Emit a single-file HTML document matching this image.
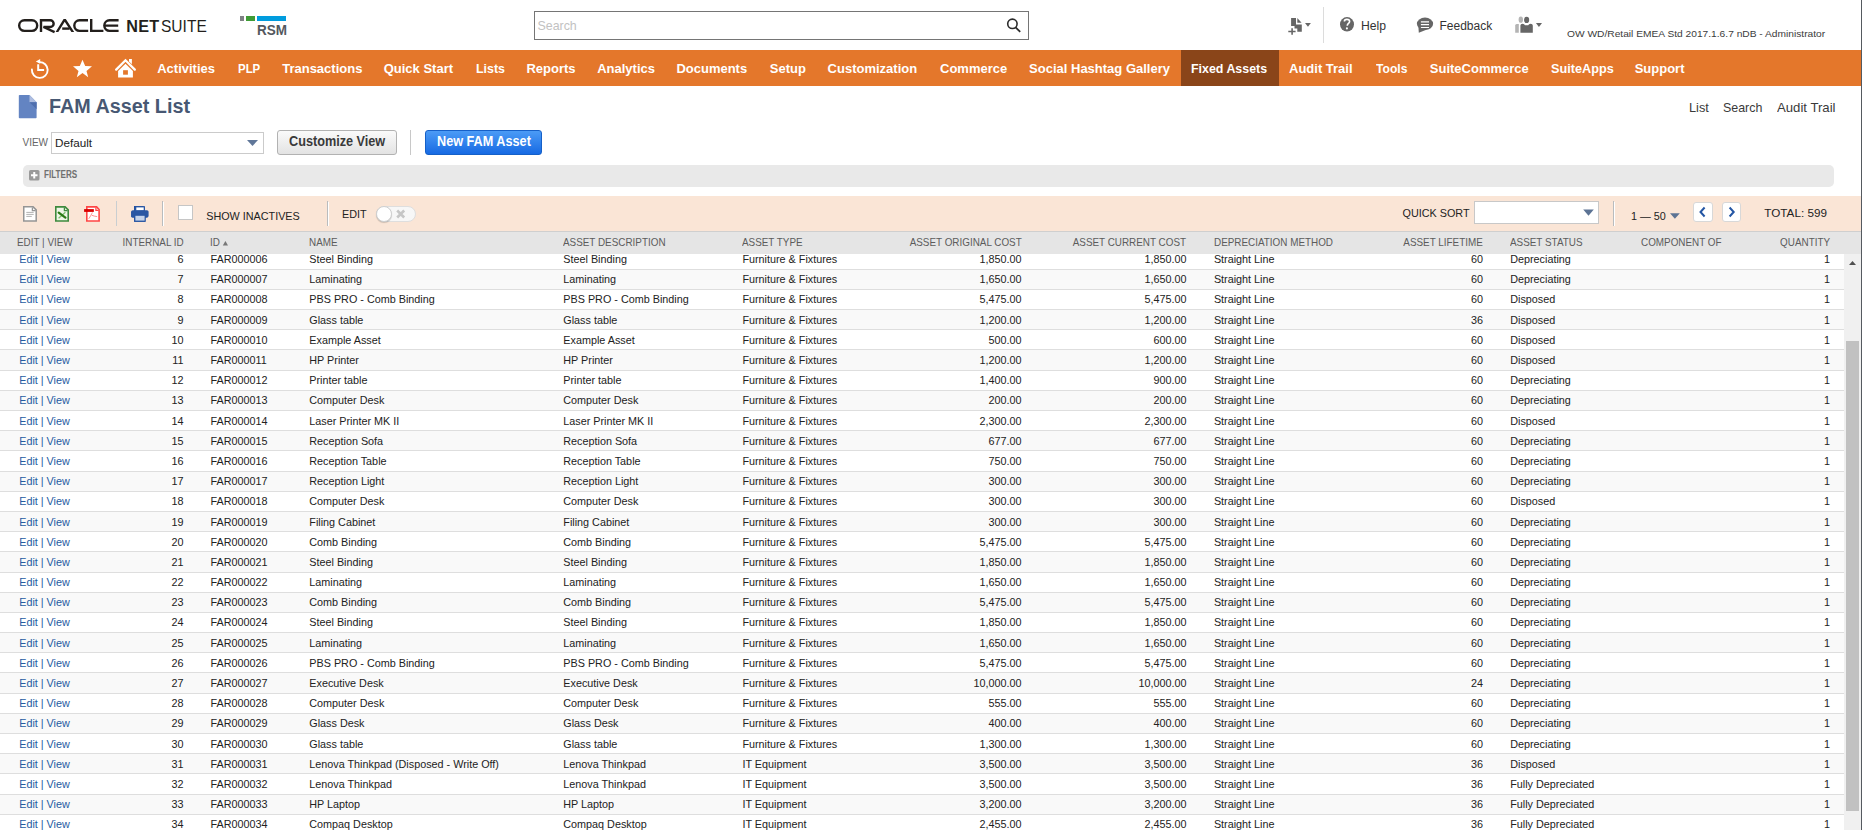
<!DOCTYPE html>
<html><head><meta charset="utf-8"><title>FAM Asset List</title>
<style>
*{margin:0;padding:0;box-sizing:border-box}
html,body{width:1862px;height:830px;overflow:hidden;background:#fff;font-family:"Liberation Sans",sans-serif;color:#333}
.a{position:absolute;white-space:nowrap;line-height:1}
#hdr{position:absolute;left:0;top:0;width:1861px;height:50px;background:#fff}
#nav{position:absolute;left:0;top:50px;width:1861px;height:36px;background:#e4772b}
.ni{position:absolute;top:0;height:36px;color:#fff;font-weight:bold;font-size:13px;line-height:1;white-space:nowrap}
.ni span{position:absolute;top:14px;left:0}
#edge{position:absolute;left:1861px;top:0;width:1px;height:830px;background:#555a60}
.row{position:absolute;left:0;width:1844px}
.sep{position:absolute;left:0;width:1844px;height:1px;background:#dedede}
.c{position:absolute;font-size:10.8px;line-height:11px;white-space:nowrap;color:#222}
.lnk{color:#255ba1}
.pipe{color:#255ba1}
.th{position:absolute;top:238.4px;font-size:10.3px;line-height:10px;white-space:nowrap;color:#5c5c5c;transform:scaleX(0.96)}

</style></head>
<body>
<div id="hdr">
  <!-- ORACLE logo -->
  <svg class="a" style="left:0;top:0" width="130" height="50" viewBox="0 0 130 50">
    <g fill="none" stroke="#231f1c" stroke-width="2.4">
      <rect x="19.15" y="20.3" width="18.05" height="10.6" rx="5.3"/>
      <path d="M41,19.1 V32.1 M41,20.3 H50.3 A3.35,3.35 0 0 1 50.3,27 H43.5 L54.6,32.1"/>
      <path d="M62.2,28.6 H69.6"/>
      <path d="M88,20.3 H79.6 A5.3,5.3 0 0 0 79.6,30.9 H88.2"/>
      <path d="M91.2,19.1 V30.9 H103.4"/>
      <path d="M118.6,20.3 H109.6 A5.3,5.3 0 0 0 109.6,30.9 H118.6 M105.5,25.6 H118.2"/>
    </g>
    <path fill="#231f1c" d="M55.6,32.1 L63.6,19.1 H65.8 L74.2,32.1 H71.4 L64.7,21.7 L58.3,32.1 Z"/>
  </svg>
  <div class="a" style="left:126.2px;top:18px;font-size:16.2px;font-weight:bold;color:#231f1c;letter-spacing:0.35px">NET</div><div class="a" style="left:160.6px;top:18px;font-size:16.2px;color:#231f1c;transform:scaleX(0.96);transform-origin:0 0">SUITE</div>
  <!-- RSM logo -->
  <div class="a" style="left:240px;top:16px;width:4px;height:5px;background:#7f8184"></div>
  <div class="a" style="left:246px;top:16px;width:9px;height:5px;background:#3f9c35"></div>
  <div class="a" style="left:257px;top:16px;width:29px;height:5px;background:#009cde"></div>
  <div class="a" style="left:257px;top:23px;font-size:14px;font-weight:bold;color:#53585e;transform:scaleX(0.965);transform-origin:0 0">RSM</div>
  <!-- search -->
  <div class="a" style="left:534px;top:11px;width:495px;height:29px;border:1px solid #757575;background:#fff"></div>
  <div class="a" style="left:537.5px;top:20px;font-size:12.4px;color:#c2c2c2">Search</div>
  <svg class="a" style="left:0;top:0" width="1862" height="50" viewBox="0 0 1862 50">
    <circle cx="1012.4" cy="23.8" r="4.7" fill="none" stroke="#2b2b2b" stroke-width="1.6"/>
    <path d="M1015.6,27.3 L1020.2,31.9" stroke="#2b2b2b" stroke-width="1.8"/>
    <path d="M1291.1,18 H1296 V24.4 H1301.8 V31.8 H1297.3 V28.5 H1294.5 V25.9 H1291.1 Z" fill="#666"/>
    <path d="M1297.3,18 V22.7 H1301.6 Z" fill="#666"/>
    <path d="M1288.3,31.45 H1295.6 M1292.1,28.2 V34.7" stroke="#666" stroke-width="1.6"/>
    <path d="M1305,23.1 H1310.9 L1307.95,26.7 Z" fill="#666"/>
    <rect x="1323" y="7" width="1" height="36" fill="#dcdcdc"/>
    <ellipse cx="1347" cy="24.3" rx="7" ry="7.3" fill="#666"/>
    <path d="M1344.4,21.4 C1344.4,19.9 1345.6,19.4 1346.9,19.4 C1348.4,19.4 1349.6,20.2 1349.6,21.6 C1349.6,23.3 1347.3,23.4 1347.3,25.4 V25.7" fill="none" stroke="#fff" stroke-width="1.6"/>
    <circle cx="1346.9" cy="28.4" r="1.05" fill="#fff"/>
    <ellipse cx="1425" cy="23.8" rx="8.1" ry="6.2" fill="#666"/>
    <path d="M1418.4,26.5 L1418.8,32.8 L1427,29.6 Z" fill="#666"/>
    <path d="M1420.9,21.8 H1429 M1420.9,24.6 H1429 M1420.9,27.5 H1429" stroke="#fff" stroke-width="1.2"/>
    <ellipse cx="1520.8" cy="19.7" rx="2.2" ry="3.1" fill="#b4b4b4"/>
    <path d="M1515.2,25.4 Q1515.2,23.9 1516.7,23.9 H1518.8 V32.8 H1515.2 Z" fill="#b4b4b4"/>
    <path d="M1519.2,16 H1523 V24 H1519.2 Z" fill="#fff" opacity="0"/>
    <ellipse cx="1526.6" cy="19.9" rx="3.1" ry="3.35" fill="#fff"/>
    <ellipse cx="1526.6" cy="19.9" rx="2.6" ry="3.1" fill="#666"/>
    <path d="M1519.6,23 V33.6 H1521" stroke="#fff" stroke-width="0.9" fill="none"/>
    <path d="M1520.4,25.6 Q1520.4,23.7 1522.6,23.7 Q1524.4,23.7 1525,25.2 H1528.2 Q1528.8,23.7 1530.6,23.7 Q1532.8,23.7 1532.8,25.6 V32.8 H1520.4 Z" fill="#666"/>
    <path d="M1535.9,23 H1542 L1538.95,26.9 Z" fill="#666"/>
  </svg>
  <div class="a" style="left:1361px;top:20px;font-size:12.2px;color:#333">Help</div>
  <div class="a" style="left:1439.5px;top:20px;font-size:12px;color:#333">Feedback</div>
  <div class="a" style="left:1566.8px;top:28.6px;font-size:9.8px;color:#3c3c3c;transform:scaleX(1.042);transform-origin:0 0">OW WD/Retail EMEA Std 2017.1.6.7 nDB - Administrator</div>
</div>
<div id="nav">
  <div class="a" style="left:1181px;top:0;width:98px;height:36px;background:#8a4519"></div>
  <div class="a" style="left:157.2px;top:12px;font-size:13px;font-weight:bold;color:#fff">Activities</div>
<div class="a" style="left:237.6px;top:12px;font-size:13px;font-weight:bold;color:#fff;transform:scaleX(0.88);transform-origin:0 0">PLP</div>
<div class="a" style="left:282.2px;top:12px;font-size:13px;font-weight:bold;color:#fff">Transactions</div>
<div class="a" style="left:383.7px;top:12px;font-size:13px;font-weight:bold;color:#fff">Quick Start</div>
<div class="a" style="left:475.9px;top:12px;font-size:13px;font-weight:bold;color:#fff;transform:scaleX(0.953);transform-origin:0 0">Lists</div>
<div class="a" style="left:526.4000000000001px;top:12px;font-size:13px;font-weight:bold;color:#fff">Reports</div>
<div class="a" style="left:597.2px;top:12px;font-size:13px;font-weight:bold;color:#fff">Analytics</div>
<div class="a" style="left:676.4000000000001px;top:12px;font-size:13px;font-weight:bold;color:#fff">Documents</div>
<div class="a" style="left:769.8000000000001px;top:12px;font-size:13px;font-weight:bold;color:#fff">Setup</div>
<div class="a" style="left:827.6px;top:12px;font-size:13px;font-weight:bold;color:#fff">Customization</div>
<div class="a" style="left:940.0px;top:12px;font-size:13px;font-weight:bold;color:#fff">Commerce</div>
<div class="a" style="left:1029.1000000000001px;top:12px;font-size:13px;font-weight:bold;color:#fff">Social Hashtag Gallery</div>
<div class="a" style="left:1190.9px;top:12px;font-size:13px;font-weight:bold;color:#fff;transform:scaleX(0.954);transform-origin:0 0">Fixed Assets</div>
<div class="a" style="left:1289.0px;top:12px;font-size:13px;font-weight:bold;color:#fff">Audit Trail</div>
<div class="a" style="left:1376.2px;top:12px;font-size:13px;font-weight:bold;color:#fff;transform:scaleX(0.932);transform-origin:0 0">Tools</div>
<div class="a" style="left:1429.8px;top:12px;font-size:13px;font-weight:bold;color:#fff">SuiteCommerce</div>
<div class="a" style="left:1550.6000000000001px;top:12px;font-size:13px;font-weight:bold;color:#fff;transform:scaleX(0.977);transform-origin:0 0">SuiteApps</div>
<div class="a" style="left:1634.7px;top:12px;font-size:13px;font-weight:bold;color:#fff">Support</div>
</div>
<svg class="a" style="left:0;top:50px" width="160" height="36" viewBox="0 50 160 36">
  <path d="M39.3,62.1 A7.9,7.9 0 1 1 31.9,69.4" fill="none" stroke="#fff" stroke-width="1.9" stroke-linecap="round"/>
  <path d="M35.8,61.4 L40.2,58.9 L40.2,63.7 Z" fill="#fff"/>
  <path d="M38.2,64.3 V70 H44.1" fill="none" stroke="#fff" stroke-width="2"/>
  <path d="M82.5,59.7 L85.2,66.1 L92,66.3 L86.5,71.1 L88.2,77.3 L82.5,72.9 L76.8,77.3 L78.5,71.1 L73,66.3 L79.8,66.1 Z" fill="#fff"/>
  <path d="M116.2,69.6 L125.5,60.3 L134.8,69.6" fill="none" stroke="#fff" stroke-width="2.3" stroke-linecap="round" stroke-linejoin="miter"/>
  <path d="M129,59 H131.9 V64.2 L129,61.4 Z" fill="#fff"/>
  <path d="M118.1,71 L125.5,63.7 L132.9,71 V77.6 H118.1 Z" fill="#fff"/>
  <rect x="123.1" y="70.2" width="4.8" height="4.5" fill="#e4772b"/>
</svg>
<!-- title -->
<svg class="a" style="left:18px;top:94px" width="20" height="26" viewBox="0 0 20 26">
  <path d="M1.6,1 H11.5 L18.6,8.2 V23.4 Q18.6,24.2 17.8,24.2 H1.6 Q0.8,24.2 0.8,23.4 V1.8 Q0.8,1 1.6,1 Z" fill="#6384c2"/>
  <path d="M11.5,1 L18.6,8.2 H11.5 Z" fill="#aebde0"/>
  <path d="M11.5,8.2 H18.6 V15.3 Z" fill="#4f6fae"/>
</svg>
<div class="a" style="left:49.3px;top:96px;font-size:20.3px;font-weight:bold;color:#475873;transform:scaleX(0.975);transform-origin:0 0">FAM Asset List</div>
<div class="a" style="left:1688.6px;top:101px;font-size:13px;color:#3a3a3a;transform:scaleX(0.98);transform-origin:0 0">List</div>
<div class="a" style="left:1722.5px;top:101px;font-size:13px;color:#3a3a3a;transform:scaleX(0.955);transform-origin:0 0">Search</div>
<div class="a" style="left:1777px;top:101px;font-size:13px;color:#3a3a3a;transform:scaleX(1.012);transform-origin:0 0">Audit Trail</div>
<!-- view row -->
<div class="a" style="left:22.5px;top:138px;font-size:10px;color:#666">VIEW</div>
<div class="a" style="left:51px;top:132px;width:213px;height:22px;border:1px solid #cbcbcb;background:#fff"></div>
<div class="a" style="left:55px;top:136.5px;font-size:11.7px;color:#222">Default</div>
<svg class="a" style="left:246px;top:139px" width="13" height="8" viewBox="0 0 13 8"><path d="M1,1 H12 L6.5,7 Z" fill="#607799"/></svg>
<div class="a" style="left:277px;top:130px;width:120px;height:25px;border:1px solid #b2b2b2;border-radius:3px;background:linear-gradient(#fafafa,#e3e3e3)"></div>
<div class="a" style="left:288.8px;top:134.1px;font-size:14px;font-weight:bold;color:#3a3a3a;transform:scaleX(0.905);transform-origin:0 0">Customize View</div>
<div class="a" style="left:410px;top:130px;width:1px;height:25px;background:#c8c8c8"></div>
<div class="a" style="left:425px;top:130px;width:117px;height:25px;border:1px solid #1560c8;border-radius:3px;background:linear-gradient(#4b9bf6,#176ae3)"></div>
<div class="a" style="left:437px;top:134.1px;font-size:14px;font-weight:bold;color:#fff;transform:scaleX(0.905);transform-origin:0 0">New FAM Asset</div>
<!-- filters -->
<div class="a" style="left:23px;top:165px;width:1811px;height:22px;border-radius:5px;background:#e9e9e9"></div>
<svg class="a" style="left:28px;top:169px" width="13" height="13" viewBox="0 0 13 13">
  <rect x="1" y="1" width="10.5" height="10.5" rx="1.6" fill="#9a9a9a"/>
  <path d="M6.25,3 V9.5 M3,6.25 H9.5" stroke="#fff" stroke-width="2"/>
</svg>
<div class="a" style="left:44px;top:169.6px;font-size:10px;font-weight:bold;color:#707070;transform:scaleX(0.81);transform-origin:0 0">FILTERS</div>
<!-- toolbar -->
<div class="a" style="left:0;top:196px;width:1861px;height:35px;background:#fae5d6"></div>
<div class="a" style="left:0;top:231px;width:1861px;height:1px;background:#cfcfcf"></div>
<!-- export icons -->
<svg class="a" style="left:0;top:196px" width="160" height="35" viewBox="0 196 160 35">
  <path d="M23.75,206.85 H33.1 L36.2,209.9 V221.05 H23.75 Z" fill="#fff" stroke="#959595" stroke-width="1.5"/>
  <path d="M32.4,207.6 V210.6 H35.6" fill="none" stroke="#959595" stroke-width="1.3"/>
  <path d="M26.3,212.4 H33.7 M26.3,214.4 H33.7 M26.3,216.4 H31.8" stroke="#a9a9a9" stroke-width="0.9"/>
  <path d="M55.8,206.85 H65.1 L68.2,209.9 V221.05 H55.8 Z" fill="#eef6e6" stroke="#3e8a3e" stroke-width="1.6"/>
  <path d="M64.4,207.6 V210.6 H67.6" fill="none" stroke="#3e8a3e" stroke-width="1.3"/>
  <path d="M65.4,212.2 L58.6,218.2" stroke="#7cbf6e" stroke-width="1.3"/>
  <path d="M58.7,212.6 L65.4,217.6" stroke="#2a7a14" stroke-width="2.3" stroke-linecap="round"/>
  <path d="M86.8,206.85 H96.6 L99.1,209.5 V221.05 H86.8 Z" fill="#fff" stroke="#ff4545" stroke-width="1.6"/>
  <path d="M95.9,207.6 V210.4 H98.6" fill="none" stroke="#ff4545" stroke-width="1.2"/>
  <rect x="84.1" y="209.1" width="9.75" height="2.8" fill="#d90000"/>
  <path d="M88.7,218.8 C90.4,216.5 91.6,214 92.4,212.4 M91.8,215.3 C93.5,216 95.5,216.4 97.2,216.6" fill="none" stroke="#ff6060" stroke-width="0.7"/>
  <path d="M134,206 H143.2 L144.8,207.7 V211.6 H134 Z" fill="#2050a0"/>
  <rect x="135.4" y="207.8" width="5.9" height="3.2" fill="#fff"/>
  <rect x="131.2" y="211.3" width="16.7" height="6.2" rx="1.2" fill="#2050a0"/>
  <rect x="134" y="213.2" width="11.1" height="8.6" fill="#2050a0"/>
  <rect x="135.4" y="214.1" width="8.6" height="5.9" fill="#d7e1f1"/>
  <path d="M136.3,215.5 H143.2 M136.3,217.7 H143.2" stroke="#9fb5da" stroke-width="0.8"/>
</svg>
<div class="a" style="left:116px;top:201px;width:1px;height:25px;background:#c9ced1"></div>
<svg class="a" style="left:129px;top:204px" width="22" height="20" viewBox="0 0 22 20">
  <rect x="6" y="2.2" width="10" height="4.6" fill="#2a56a3"/>
  <rect x="7.3" y="3.4" width="7.4" height="3" fill="#fff"/>
  <rect x="2.2" y="6.2" width="17.4" height="7.2" rx="1.6" fill="#2a56a3"/>
  <rect x="5.2" y="10.4" width="11.6" height="7.4" fill="#2a56a3"/>
  <rect x="6.4" y="11.8" width="9.2" height="4.8" fill="#c4d2ea"/>
</svg>
<div class="a" style="left:162px;top:201px;width:1px;height:25px;background:#b9bcbe"></div><div class="a" style="left:163px;top:202px;width:1px;height:24px;background:#fff"></div>
<div class="a" style="left:178px;top:205px;width:15px;height:15px;border:1px solid #c6c6c6;background:#fff"></div>
<div class="a" style="left:206.2px;top:211px;font-size:10.8px;color:#222">SHOW INACTIVES</div>
<div class="a" style="left:327px;top:201px;width:1px;height:25px;background:#b9bcbe"></div><div class="a" style="left:328px;top:202px;width:1px;height:24px;background:#fff"></div>
<div class="a" style="left:342px;top:209.2px;font-size:10.8px;color:#222">EDIT</div>
<div class="a" style="left:376px;top:206px;width:39.5px;height:16px;border:1px solid #dedede;border-radius:8px;background:#f7f7f7"></div>
<div class="a" style="left:376px;top:206px;width:16px;height:16px;border-radius:8px;background:#fff;border:1px solid #cfcfcf;box-shadow:0 1px 1px rgba(0,0,0,0.18)"></div>
<svg class="a" style="left:394px;top:208px" width="14" height="12" viewBox="0 0 14 12"><path d="M3.2,2.5 L10.2,9.5 M10.2,2.5 L3.2,9.5" stroke="#c6c6c6" stroke-width="2.6"/></svg>
<div class="a" style="left:1402.5px;top:208px;font-size:10.8px;color:#222">QUICK SORT</div>
<div class="a" style="left:1474px;top:201px;width:125px;height:23px;border:1px solid #c8c8c8;background:#fff"></div>
<svg class="a" style="left:1582px;top:208px" width="13" height="9" viewBox="0 0 13 9"><path d="M1.2,1.5 H11.8 L6.5,7.8 Z" fill="#5c7394"/></svg>
<div class="a" style="left:1613px;top:201px;width:1px;height:25px;background:#b9bcbe"></div><div class="a" style="left:1614px;top:202px;width:1px;height:24px;background:#fff"></div>
<div class="a" style="left:1631px;top:211px;font-size:10.8px;color:#222">1 — 50</div>
<svg class="a" style="left:1669px;top:212px" width="12" height="8" viewBox="0 0 12 8"><path d="M1,1.2 H10.8 L5.9,6.8 Z" fill="#5c7394"/></svg>
<div class="a" style="left:1693px;top:202px;width:20px;height:20px;border:1px solid #d8d8d8;border-radius:3px;background:#fff"></div>
<svg class="a" style="left:1693px;top:202px" width="20" height="20" viewBox="0 0 20 20"><path d="M11.6,5.5 L7.5,10 L11.6,14.5" fill="none" stroke="#2456a4" stroke-width="2"/></svg>
<div class="a" style="left:1722px;top:202px;width:19px;height:20px;border:1px solid #d8d8d8;border-radius:3px;background:#fff"></div>
<svg class="a" style="left:1722px;top:202px" width="19" height="20" viewBox="0 0 19 20"><path d="M7.6,5.5 L11.7,10 L7.6,14.5" fill="none" stroke="#2456a4" stroke-width="2"/></svg>
<div class="a" style="left:1764.3px;top:207.3px;font-size:11.7px;color:#222">TOTAL: 599</div>

<!-- table header -->
<div class="a" style="left:0;top:232px;width:1861px;height:22px;background:#e5e5e5"></div>
<div class="th" style="left:16.8px;transform-origin:0 0">EDIT | VIEW</div>
<div class="th" style="right:1678.4px;transform-origin:100% 0">INTERNAL ID</div>
<div class="th" style="left:210.3px;transform-origin:0 0">ID</div>
<div class="th" style="left:309.1px;transform-origin:0 0">NAME</div>
<div class="th" style="left:563.0999999999999px;transform-origin:0 0">ASSET DESCRIPTION</div>
<div class="th" style="left:742.0999999999999px;transform-origin:0 0">ASSET TYPE</div>
<div class="th" style="right:840.6px;transform-origin:100% 0">ASSET ORIGINAL COST</div>
<div class="th" style="right:675.8px;transform-origin:100% 0">ASSET CURRENT COST</div>
<div class="th" style="left:1213.7px;transform-origin:0 0">DEPRECIATION METHOD</div>
<div class="th" style="right:378.99999999999994px;transform-origin:100% 0">ASSET LIFETIME</div>
<div class="th" style="left:1509.8999999999999px;transform-origin:0 0">ASSET STATUS</div>
<div class="th" style="left:1640.8px;transform-origin:0 0">COMPONENT OF</div>
<div class="th" style="right:31.7px;transform-origin:100% 0">QUANTITY</div>
<svg class="a" style="left:222px;top:240px" width="7" height="6" viewBox="0 0 7 6"><path d="M0.8,5.6 L3.4,1 L6,5.6 Z" fill="#777"/></svg>
<div class="row" style="top:254px;height:15px;background:#ffffff"></div>
<div class="sep" style="top:269px"></div>
<div class="c" style="top:254px;left:19.2px"><span class="lnk">Edit</span> <span class="pipe">|</span> <span class="lnk">View</span></div>
<div class="c r" style="top:254px;right:1678.5px">6</div>
<div class="c" style="top:254px;left:210.5px">FAR000006</div>
<div class="c" style="top:254px;left:309.3px">Steel Binding</div>
<div class="c" style="top:254px;left:563.3px">Steel Binding</div>
<div class="c" style="top:254px;left:742.4px">Furniture &amp; Fixtures</div>
<div class="c r" style="top:254px;right:840.5px">1,850.00</div>
<div class="c r" style="top:254px;right:675.5px">1,850.00</div>
<div class="c" style="top:254px;left:1213.9px">Straight Line</div>
<div class="c r" style="top:254px;right:379.0px">60</div>
<div class="c" style="top:254px;left:1510.2px">Depreciating</div>
<div class="c r" style="top:254px;right:32.0px">1</div>
<div class="row" style="top:270px;height:19px;background:#f9f9f9"></div>
<div class="sep" style="top:289px"></div>
<div class="c" style="top:274px;left:19.2px"><span class="lnk">Edit</span> <span class="pipe">|</span> <span class="lnk">View</span></div>
<div class="c r" style="top:274px;right:1678.5px">7</div>
<div class="c" style="top:274px;left:210.5px">FAR000007</div>
<div class="c" style="top:274px;left:309.3px">Laminating</div>
<div class="c" style="top:274px;left:563.3px">Laminating</div>
<div class="c" style="top:274px;left:742.4px">Furniture &amp; Fixtures</div>
<div class="c r" style="top:274px;right:840.5px">1,650.00</div>
<div class="c r" style="top:274px;right:675.5px">1,650.00</div>
<div class="c" style="top:274px;left:1213.9px">Straight Line</div>
<div class="c r" style="top:274px;right:379.0px">60</div>
<div class="c" style="top:274px;left:1510.2px">Depreciating</div>
<div class="c r" style="top:274px;right:32.0px">1</div>
<div class="row" style="top:290px;height:19px;background:#ffffff"></div>
<div class="sep" style="top:309px"></div>
<div class="c" style="top:294px;left:19.2px"><span class="lnk">Edit</span> <span class="pipe">|</span> <span class="lnk">View</span></div>
<div class="c r" style="top:294px;right:1678.5px">8</div>
<div class="c" style="top:294px;left:210.5px">FAR000008</div>
<div class="c" style="top:294px;left:309.3px">PBS PRO - Comb Binding</div>
<div class="c" style="top:294px;left:563.3px">PBS PRO - Comb Binding</div>
<div class="c" style="top:294px;left:742.4px">Furniture &amp; Fixtures</div>
<div class="c r" style="top:294px;right:840.5px">5,475.00</div>
<div class="c r" style="top:294px;right:675.5px">5,475.00</div>
<div class="c" style="top:294px;left:1213.9px">Straight Line</div>
<div class="c r" style="top:294px;right:379.0px">60</div>
<div class="c" style="top:294px;left:1510.2px">Disposed</div>
<div class="c r" style="top:294px;right:32.0px">1</div>
<div class="row" style="top:310px;height:19px;background:#f9f9f9"></div>
<div class="sep" style="top:329px"></div>
<div class="c" style="top:315px;left:19.2px"><span class="lnk">Edit</span> <span class="pipe">|</span> <span class="lnk">View</span></div>
<div class="c r" style="top:315px;right:1678.5px">9</div>
<div class="c" style="top:315px;left:210.5px">FAR000009</div>
<div class="c" style="top:315px;left:309.3px">Glass table</div>
<div class="c" style="top:315px;left:563.3px">Glass table</div>
<div class="c" style="top:315px;left:742.4px">Furniture &amp; Fixtures</div>
<div class="c r" style="top:315px;right:840.5px">1,200.00</div>
<div class="c r" style="top:315px;right:675.5px">1,200.00</div>
<div class="c" style="top:315px;left:1213.9px">Straight Line</div>
<div class="c r" style="top:315px;right:379.0px">36</div>
<div class="c" style="top:315px;left:1510.2px">Disposed</div>
<div class="c r" style="top:315px;right:32.0px">1</div>
<div class="row" style="top:330px;height:19px;background:#ffffff"></div>
<div class="sep" style="top:349px"></div>
<div class="c" style="top:335px;left:19.2px"><span class="lnk">Edit</span> <span class="pipe">|</span> <span class="lnk">View</span></div>
<div class="c r" style="top:335px;right:1678.5px">10</div>
<div class="c" style="top:335px;left:210.5px">FAR000010</div>
<div class="c" style="top:335px;left:309.3px">Example Asset</div>
<div class="c" style="top:335px;left:563.3px">Example Asset</div>
<div class="c" style="top:335px;left:742.4px">Furniture &amp; Fixtures</div>
<div class="c r" style="top:335px;right:840.5px">500.00</div>
<div class="c r" style="top:335px;right:675.5px">600.00</div>
<div class="c" style="top:335px;left:1213.9px">Straight Line</div>
<div class="c r" style="top:335px;right:379.0px">60</div>
<div class="c" style="top:335px;left:1510.2px">Disposed</div>
<div class="c r" style="top:335px;right:32.0px">1</div>
<div class="row" style="top:350px;height:20px;background:#f9f9f9"></div>
<div class="sep" style="top:370px"></div>
<div class="c" style="top:355px;left:19.2px"><span class="lnk">Edit</span> <span class="pipe">|</span> <span class="lnk">View</span></div>
<div class="c r" style="top:355px;right:1678.5px">11</div>
<div class="c" style="top:355px;left:210.5px">FAR000011</div>
<div class="c" style="top:355px;left:309.3px">HP Printer</div>
<div class="c" style="top:355px;left:563.3px">HP Printer</div>
<div class="c" style="top:355px;left:742.4px">Furniture &amp; Fixtures</div>
<div class="c r" style="top:355px;right:840.5px">1,200.00</div>
<div class="c r" style="top:355px;right:675.5px">1,200.00</div>
<div class="c" style="top:355px;left:1213.9px">Straight Line</div>
<div class="c r" style="top:355px;right:379.0px">60</div>
<div class="c" style="top:355px;left:1510.2px">Disposed</div>
<div class="c r" style="top:355px;right:32.0px">1</div>
<div class="row" style="top:371px;height:19px;background:#ffffff"></div>
<div class="sep" style="top:390px"></div>
<div class="c" style="top:375px;left:19.2px"><span class="lnk">Edit</span> <span class="pipe">|</span> <span class="lnk">View</span></div>
<div class="c r" style="top:375px;right:1678.5px">12</div>
<div class="c" style="top:375px;left:210.5px">FAR000012</div>
<div class="c" style="top:375px;left:309.3px">Printer table</div>
<div class="c" style="top:375px;left:563.3px">Printer table</div>
<div class="c" style="top:375px;left:742.4px">Furniture &amp; Fixtures</div>
<div class="c r" style="top:375px;right:840.5px">1,400.00</div>
<div class="c r" style="top:375px;right:675.5px">900.00</div>
<div class="c" style="top:375px;left:1213.9px">Straight Line</div>
<div class="c r" style="top:375px;right:379.0px">60</div>
<div class="c" style="top:375px;left:1510.2px">Depreciating</div>
<div class="c r" style="top:375px;right:32.0px">1</div>
<div class="row" style="top:391px;height:19px;background:#f9f9f9"></div>
<div class="sep" style="top:410px"></div>
<div class="c" style="top:395px;left:19.2px"><span class="lnk">Edit</span> <span class="pipe">|</span> <span class="lnk">View</span></div>
<div class="c r" style="top:395px;right:1678.5px">13</div>
<div class="c" style="top:395px;left:210.5px">FAR000013</div>
<div class="c" style="top:395px;left:309.3px">Computer Desk</div>
<div class="c" style="top:395px;left:563.3px">Computer Desk</div>
<div class="c" style="top:395px;left:742.4px">Furniture &amp; Fixtures</div>
<div class="c r" style="top:395px;right:840.5px">200.00</div>
<div class="c r" style="top:395px;right:675.5px">200.00</div>
<div class="c" style="top:395px;left:1213.9px">Straight Line</div>
<div class="c r" style="top:395px;right:379.0px">60</div>
<div class="c" style="top:395px;left:1510.2px">Depreciating</div>
<div class="c r" style="top:395px;right:32.0px">1</div>
<div class="row" style="top:411px;height:19px;background:#ffffff"></div>
<div class="sep" style="top:430px"></div>
<div class="c" style="top:416px;left:19.2px"><span class="lnk">Edit</span> <span class="pipe">|</span> <span class="lnk">View</span></div>
<div class="c r" style="top:416px;right:1678.5px">14</div>
<div class="c" style="top:416px;left:210.5px">FAR000014</div>
<div class="c" style="top:416px;left:309.3px">Laser Printer MK II</div>
<div class="c" style="top:416px;left:563.3px">Laser Printer MK II</div>
<div class="c" style="top:416px;left:742.4px">Furniture &amp; Fixtures</div>
<div class="c r" style="top:416px;right:840.5px">2,300.00</div>
<div class="c r" style="top:416px;right:675.5px">2,300.00</div>
<div class="c" style="top:416px;left:1213.9px">Straight Line</div>
<div class="c r" style="top:416px;right:379.0px">60</div>
<div class="c" style="top:416px;left:1510.2px">Disposed</div>
<div class="c r" style="top:416px;right:32.0px">1</div>
<div class="row" style="top:431px;height:19px;background:#f9f9f9"></div>
<div class="sep" style="top:450px"></div>
<div class="c" style="top:436px;left:19.2px"><span class="lnk">Edit</span> <span class="pipe">|</span> <span class="lnk">View</span></div>
<div class="c r" style="top:436px;right:1678.5px">15</div>
<div class="c" style="top:436px;left:210.5px">FAR000015</div>
<div class="c" style="top:436px;left:309.3px">Reception Sofa</div>
<div class="c" style="top:436px;left:563.3px">Reception Sofa</div>
<div class="c" style="top:436px;left:742.4px">Furniture &amp; Fixtures</div>
<div class="c r" style="top:436px;right:840.5px">677.00</div>
<div class="c r" style="top:436px;right:675.5px">677.00</div>
<div class="c" style="top:436px;left:1213.9px">Straight Line</div>
<div class="c r" style="top:436px;right:379.0px">60</div>
<div class="c" style="top:436px;left:1510.2px">Depreciating</div>
<div class="c r" style="top:436px;right:32.0px">1</div>
<div class="row" style="top:451px;height:20px;background:#ffffff"></div>
<div class="sep" style="top:471px"></div>
<div class="c" style="top:456px;left:19.2px"><span class="lnk">Edit</span> <span class="pipe">|</span> <span class="lnk">View</span></div>
<div class="c r" style="top:456px;right:1678.5px">16</div>
<div class="c" style="top:456px;left:210.5px">FAR000016</div>
<div class="c" style="top:456px;left:309.3px">Reception Table</div>
<div class="c" style="top:456px;left:563.3px">Reception Table</div>
<div class="c" style="top:456px;left:742.4px">Furniture &amp; Fixtures</div>
<div class="c r" style="top:456px;right:840.5px">750.00</div>
<div class="c r" style="top:456px;right:675.5px">750.00</div>
<div class="c" style="top:456px;left:1213.9px">Straight Line</div>
<div class="c r" style="top:456px;right:379.0px">60</div>
<div class="c" style="top:456px;left:1510.2px">Depreciating</div>
<div class="c r" style="top:456px;right:32.0px">1</div>
<div class="row" style="top:472px;height:19px;background:#f9f9f9"></div>
<div class="sep" style="top:491px"></div>
<div class="c" style="top:476px;left:19.2px"><span class="lnk">Edit</span> <span class="pipe">|</span> <span class="lnk">View</span></div>
<div class="c r" style="top:476px;right:1678.5px">17</div>
<div class="c" style="top:476px;left:210.5px">FAR000017</div>
<div class="c" style="top:476px;left:309.3px">Reception Light</div>
<div class="c" style="top:476px;left:563.3px">Reception Light</div>
<div class="c" style="top:476px;left:742.4px">Furniture &amp; Fixtures</div>
<div class="c r" style="top:476px;right:840.5px">300.00</div>
<div class="c r" style="top:476px;right:675.5px">300.00</div>
<div class="c" style="top:476px;left:1213.9px">Straight Line</div>
<div class="c r" style="top:476px;right:379.0px">60</div>
<div class="c" style="top:476px;left:1510.2px">Depreciating</div>
<div class="c r" style="top:476px;right:32.0px">1</div>
<div class="row" style="top:492px;height:19px;background:#ffffff"></div>
<div class="sep" style="top:511px"></div>
<div class="c" style="top:496px;left:19.2px"><span class="lnk">Edit</span> <span class="pipe">|</span> <span class="lnk">View</span></div>
<div class="c r" style="top:496px;right:1678.5px">18</div>
<div class="c" style="top:496px;left:210.5px">FAR000018</div>
<div class="c" style="top:496px;left:309.3px">Computer Desk</div>
<div class="c" style="top:496px;left:563.3px">Computer Desk</div>
<div class="c" style="top:496px;left:742.4px">Furniture &amp; Fixtures</div>
<div class="c r" style="top:496px;right:840.5px">300.00</div>
<div class="c r" style="top:496px;right:675.5px">300.00</div>
<div class="c" style="top:496px;left:1213.9px">Straight Line</div>
<div class="c r" style="top:496px;right:379.0px">60</div>
<div class="c" style="top:496px;left:1510.2px">Disposed</div>
<div class="c r" style="top:496px;right:32.0px">1</div>
<div class="row" style="top:512px;height:19px;background:#f9f9f9"></div>
<div class="sep" style="top:531px"></div>
<div class="c" style="top:517px;left:19.2px"><span class="lnk">Edit</span> <span class="pipe">|</span> <span class="lnk">View</span></div>
<div class="c r" style="top:517px;right:1678.5px">19</div>
<div class="c" style="top:517px;left:210.5px">FAR000019</div>
<div class="c" style="top:517px;left:309.3px">Filing Cabinet</div>
<div class="c" style="top:517px;left:563.3px">Filing Cabinet</div>
<div class="c" style="top:517px;left:742.4px">Furniture &amp; Fixtures</div>
<div class="c r" style="top:517px;right:840.5px">300.00</div>
<div class="c r" style="top:517px;right:675.5px">300.00</div>
<div class="c" style="top:517px;left:1213.9px">Straight Line</div>
<div class="c r" style="top:517px;right:379.0px">60</div>
<div class="c" style="top:517px;left:1510.2px">Depreciating</div>
<div class="c r" style="top:517px;right:32.0px">1</div>
<div class="row" style="top:532px;height:19px;background:#ffffff"></div>
<div class="sep" style="top:551px"></div>
<div class="c" style="top:537px;left:19.2px"><span class="lnk">Edit</span> <span class="pipe">|</span> <span class="lnk">View</span></div>
<div class="c r" style="top:537px;right:1678.5px">20</div>
<div class="c" style="top:537px;left:210.5px">FAR000020</div>
<div class="c" style="top:537px;left:309.3px">Comb Binding</div>
<div class="c" style="top:537px;left:563.3px">Comb Binding</div>
<div class="c" style="top:537px;left:742.4px">Furniture &amp; Fixtures</div>
<div class="c r" style="top:537px;right:840.5px">5,475.00</div>
<div class="c r" style="top:537px;right:675.5px">5,475.00</div>
<div class="c" style="top:537px;left:1213.9px">Straight Line</div>
<div class="c r" style="top:537px;right:379.0px">60</div>
<div class="c" style="top:537px;left:1510.2px">Depreciating</div>
<div class="c r" style="top:537px;right:32.0px">1</div>
<div class="row" style="top:552px;height:20px;background:#f9f9f9"></div>
<div class="sep" style="top:572px"></div>
<div class="c" style="top:557px;left:19.2px"><span class="lnk">Edit</span> <span class="pipe">|</span> <span class="lnk">View</span></div>
<div class="c r" style="top:557px;right:1678.5px">21</div>
<div class="c" style="top:557px;left:210.5px">FAR000021</div>
<div class="c" style="top:557px;left:309.3px">Steel Binding</div>
<div class="c" style="top:557px;left:563.3px">Steel Binding</div>
<div class="c" style="top:557px;left:742.4px">Furniture &amp; Fixtures</div>
<div class="c r" style="top:557px;right:840.5px">1,850.00</div>
<div class="c r" style="top:557px;right:675.5px">1,850.00</div>
<div class="c" style="top:557px;left:1213.9px">Straight Line</div>
<div class="c r" style="top:557px;right:379.0px">60</div>
<div class="c" style="top:557px;left:1510.2px">Depreciating</div>
<div class="c r" style="top:557px;right:32.0px">1</div>
<div class="row" style="top:573px;height:19px;background:#ffffff"></div>
<div class="sep" style="top:592px"></div>
<div class="c" style="top:577px;left:19.2px"><span class="lnk">Edit</span> <span class="pipe">|</span> <span class="lnk">View</span></div>
<div class="c r" style="top:577px;right:1678.5px">22</div>
<div class="c" style="top:577px;left:210.5px">FAR000022</div>
<div class="c" style="top:577px;left:309.3px">Laminating</div>
<div class="c" style="top:577px;left:563.3px">Laminating</div>
<div class="c" style="top:577px;left:742.4px">Furniture &amp; Fixtures</div>
<div class="c r" style="top:577px;right:840.5px">1,650.00</div>
<div class="c r" style="top:577px;right:675.5px">1,650.00</div>
<div class="c" style="top:577px;left:1213.9px">Straight Line</div>
<div class="c r" style="top:577px;right:379.0px">60</div>
<div class="c" style="top:577px;left:1510.2px">Depreciating</div>
<div class="c r" style="top:577px;right:32.0px">1</div>
<div class="row" style="top:593px;height:19px;background:#f9f9f9"></div>
<div class="sep" style="top:612px"></div>
<div class="c" style="top:597px;left:19.2px"><span class="lnk">Edit</span> <span class="pipe">|</span> <span class="lnk">View</span></div>
<div class="c r" style="top:597px;right:1678.5px">23</div>
<div class="c" style="top:597px;left:210.5px">FAR000023</div>
<div class="c" style="top:597px;left:309.3px">Comb Binding</div>
<div class="c" style="top:597px;left:563.3px">Comb Binding</div>
<div class="c" style="top:597px;left:742.4px">Furniture &amp; Fixtures</div>
<div class="c r" style="top:597px;right:840.5px">5,475.00</div>
<div class="c r" style="top:597px;right:675.5px">5,475.00</div>
<div class="c" style="top:597px;left:1213.9px">Straight Line</div>
<div class="c r" style="top:597px;right:379.0px">60</div>
<div class="c" style="top:597px;left:1510.2px">Depreciating</div>
<div class="c r" style="top:597px;right:32.0px">1</div>
<div class="row" style="top:613px;height:19px;background:#ffffff"></div>
<div class="sep" style="top:632px"></div>
<div class="c" style="top:617px;left:19.2px"><span class="lnk">Edit</span> <span class="pipe">|</span> <span class="lnk">View</span></div>
<div class="c r" style="top:617px;right:1678.5px">24</div>
<div class="c" style="top:617px;left:210.5px">FAR000024</div>
<div class="c" style="top:617px;left:309.3px">Steel Binding</div>
<div class="c" style="top:617px;left:563.3px">Steel Binding</div>
<div class="c" style="top:617px;left:742.4px">Furniture &amp; Fixtures</div>
<div class="c r" style="top:617px;right:840.5px">1,850.00</div>
<div class="c r" style="top:617px;right:675.5px">1,850.00</div>
<div class="c" style="top:617px;left:1213.9px">Straight Line</div>
<div class="c r" style="top:617px;right:379.0px">60</div>
<div class="c" style="top:617px;left:1510.2px">Depreciating</div>
<div class="c r" style="top:617px;right:32.0px">1</div>
<div class="row" style="top:633px;height:19px;background:#f9f9f9"></div>
<div class="sep" style="top:652px"></div>
<div class="c" style="top:638px;left:19.2px"><span class="lnk">Edit</span> <span class="pipe">|</span> <span class="lnk">View</span></div>
<div class="c r" style="top:638px;right:1678.5px">25</div>
<div class="c" style="top:638px;left:210.5px">FAR000025</div>
<div class="c" style="top:638px;left:309.3px">Laminating</div>
<div class="c" style="top:638px;left:563.3px">Laminating</div>
<div class="c" style="top:638px;left:742.4px">Furniture &amp; Fixtures</div>
<div class="c r" style="top:638px;right:840.5px">1,650.00</div>
<div class="c r" style="top:638px;right:675.5px">1,650.00</div>
<div class="c" style="top:638px;left:1213.9px">Straight Line</div>
<div class="c r" style="top:638px;right:379.0px">60</div>
<div class="c" style="top:638px;left:1510.2px">Depreciating</div>
<div class="c r" style="top:638px;right:32.0px">1</div>
<div class="row" style="top:653px;height:19px;background:#ffffff"></div>
<div class="sep" style="top:672px"></div>
<div class="c" style="top:658px;left:19.2px"><span class="lnk">Edit</span> <span class="pipe">|</span> <span class="lnk">View</span></div>
<div class="c r" style="top:658px;right:1678.5px">26</div>
<div class="c" style="top:658px;left:210.5px">FAR000026</div>
<div class="c" style="top:658px;left:309.3px">PBS PRO - Comb Binding</div>
<div class="c" style="top:658px;left:563.3px">PBS PRO - Comb Binding</div>
<div class="c" style="top:658px;left:742.4px">Furniture &amp; Fixtures</div>
<div class="c r" style="top:658px;right:840.5px">5,475.00</div>
<div class="c r" style="top:658px;right:675.5px">5,475.00</div>
<div class="c" style="top:658px;left:1213.9px">Straight Line</div>
<div class="c r" style="top:658px;right:379.0px">60</div>
<div class="c" style="top:658px;left:1510.2px">Depreciating</div>
<div class="c r" style="top:658px;right:32.0px">1</div>
<div class="row" style="top:673px;height:20px;background:#f9f9f9"></div>
<div class="sep" style="top:693px"></div>
<div class="c" style="top:678px;left:19.2px"><span class="lnk">Edit</span> <span class="pipe">|</span> <span class="lnk">View</span></div>
<div class="c r" style="top:678px;right:1678.5px">27</div>
<div class="c" style="top:678px;left:210.5px">FAR000027</div>
<div class="c" style="top:678px;left:309.3px">Executive Desk</div>
<div class="c" style="top:678px;left:563.3px">Executive Desk</div>
<div class="c" style="top:678px;left:742.4px">Furniture &amp; Fixtures</div>
<div class="c r" style="top:678px;right:840.5px">10,000.00</div>
<div class="c r" style="top:678px;right:675.5px">10,000.00</div>
<div class="c" style="top:678px;left:1213.9px">Straight Line</div>
<div class="c r" style="top:678px;right:379.0px">24</div>
<div class="c" style="top:678px;left:1510.2px">Depreciating</div>
<div class="c r" style="top:678px;right:32.0px">1</div>
<div class="row" style="top:694px;height:19px;background:#ffffff"></div>
<div class="sep" style="top:713px"></div>
<div class="c" style="top:698px;left:19.2px"><span class="lnk">Edit</span> <span class="pipe">|</span> <span class="lnk">View</span></div>
<div class="c r" style="top:698px;right:1678.5px">28</div>
<div class="c" style="top:698px;left:210.5px">FAR000028</div>
<div class="c" style="top:698px;left:309.3px">Computer Desk</div>
<div class="c" style="top:698px;left:563.3px">Computer Desk</div>
<div class="c" style="top:698px;left:742.4px">Furniture &amp; Fixtures</div>
<div class="c r" style="top:698px;right:840.5px">555.00</div>
<div class="c r" style="top:698px;right:675.5px">555.00</div>
<div class="c" style="top:698px;left:1213.9px">Straight Line</div>
<div class="c r" style="top:698px;right:379.0px">60</div>
<div class="c" style="top:698px;left:1510.2px">Depreciating</div>
<div class="c r" style="top:698px;right:32.0px">1</div>
<div class="row" style="top:714px;height:19px;background:#f9f9f9"></div>
<div class="sep" style="top:733px"></div>
<div class="c" style="top:718px;left:19.2px"><span class="lnk">Edit</span> <span class="pipe">|</span> <span class="lnk">View</span></div>
<div class="c r" style="top:718px;right:1678.5px">29</div>
<div class="c" style="top:718px;left:210.5px">FAR000029</div>
<div class="c" style="top:718px;left:309.3px">Glass Desk</div>
<div class="c" style="top:718px;left:563.3px">Glass Desk</div>
<div class="c" style="top:718px;left:742.4px">Furniture &amp; Fixtures</div>
<div class="c r" style="top:718px;right:840.5px">400.00</div>
<div class="c r" style="top:718px;right:675.5px">400.00</div>
<div class="c" style="top:718px;left:1213.9px">Straight Line</div>
<div class="c r" style="top:718px;right:379.0px">60</div>
<div class="c" style="top:718px;left:1510.2px">Depreciating</div>
<div class="c r" style="top:718px;right:32.0px">1</div>
<div class="row" style="top:734px;height:19px;background:#ffffff"></div>
<div class="sep" style="top:753px"></div>
<div class="c" style="top:739px;left:19.2px"><span class="lnk">Edit</span> <span class="pipe">|</span> <span class="lnk">View</span></div>
<div class="c r" style="top:739px;right:1678.5px">30</div>
<div class="c" style="top:739px;left:210.5px">FAR000030</div>
<div class="c" style="top:739px;left:309.3px">Glass table</div>
<div class="c" style="top:739px;left:563.3px">Glass table</div>
<div class="c" style="top:739px;left:742.4px">Furniture &amp; Fixtures</div>
<div class="c r" style="top:739px;right:840.5px">1,300.00</div>
<div class="c r" style="top:739px;right:675.5px">1,300.00</div>
<div class="c" style="top:739px;left:1213.9px">Straight Line</div>
<div class="c r" style="top:739px;right:379.0px">60</div>
<div class="c" style="top:739px;left:1510.2px">Depreciating</div>
<div class="c r" style="top:739px;right:32.0px">1</div>
<div class="row" style="top:754px;height:19px;background:#f9f9f9"></div>
<div class="sep" style="top:773px"></div>
<div class="c" style="top:759px;left:19.2px"><span class="lnk">Edit</span> <span class="pipe">|</span> <span class="lnk">View</span></div>
<div class="c r" style="top:759px;right:1678.5px">31</div>
<div class="c" style="top:759px;left:210.5px">FAR000031</div>
<div class="c" style="top:759px;left:309.3px">Lenova Thinkpad (Disposed - Write Off)</div>
<div class="c" style="top:759px;left:563.3px">Lenova Thinkpad</div>
<div class="c" style="top:759px;left:742.4px">IT Equipment</div>
<div class="c r" style="top:759px;right:840.5px">3,500.00</div>
<div class="c r" style="top:759px;right:675.5px">3,500.00</div>
<div class="c" style="top:759px;left:1213.9px">Straight Line</div>
<div class="c r" style="top:759px;right:379.0px">36</div>
<div class="c" style="top:759px;left:1510.2px">Disposed</div>
<div class="c r" style="top:759px;right:32.0px">1</div>
<div class="row" style="top:774px;height:20px;background:#ffffff"></div>
<div class="sep" style="top:794px"></div>
<div class="c" style="top:779px;left:19.2px"><span class="lnk">Edit</span> <span class="pipe">|</span> <span class="lnk">View</span></div>
<div class="c r" style="top:779px;right:1678.5px">32</div>
<div class="c" style="top:779px;left:210.5px">FAR000032</div>
<div class="c" style="top:779px;left:309.3px">Lenova Thinkpad</div>
<div class="c" style="top:779px;left:563.3px">Lenova Thinkpad</div>
<div class="c" style="top:779px;left:742.4px">IT Equipment</div>
<div class="c r" style="top:779px;right:840.5px">3,500.00</div>
<div class="c r" style="top:779px;right:675.5px">3,500.00</div>
<div class="c" style="top:779px;left:1213.9px">Straight Line</div>
<div class="c r" style="top:779px;right:379.0px">36</div>
<div class="c" style="top:779px;left:1510.2px">Fully Depreciated</div>
<div class="c r" style="top:779px;right:32.0px">1</div>
<div class="row" style="top:795px;height:19px;background:#f9f9f9"></div>
<div class="sep" style="top:814px"></div>
<div class="c" style="top:799px;left:19.2px"><span class="lnk">Edit</span> <span class="pipe">|</span> <span class="lnk">View</span></div>
<div class="c r" style="top:799px;right:1678.5px">33</div>
<div class="c" style="top:799px;left:210.5px">FAR000033</div>
<div class="c" style="top:799px;left:309.3px">HP Laptop</div>
<div class="c" style="top:799px;left:563.3px">HP Laptop</div>
<div class="c" style="top:799px;left:742.4px">IT Equipment</div>
<div class="c r" style="top:799px;right:840.5px">3,200.00</div>
<div class="c r" style="top:799px;right:675.5px">3,200.00</div>
<div class="c" style="top:799px;left:1213.9px">Straight Line</div>
<div class="c r" style="top:799px;right:379.0px">36</div>
<div class="c" style="top:799px;left:1510.2px">Fully Depreciated</div>
<div class="c r" style="top:799px;right:32.0px">1</div>
<div class="row" style="top:815px;height:19px;background:#ffffff"></div>
<div class="sep" style="top:834px"></div>
<div class="c" style="top:819px;left:19.2px"><span class="lnk">Edit</span> <span class="pipe">|</span> <span class="lnk">View</span></div>
<div class="c r" style="top:819px;right:1678.5px">34</div>
<div class="c" style="top:819px;left:210.5px">FAR000034</div>
<div class="c" style="top:819px;left:309.3px">Compaq Desktop</div>
<div class="c" style="top:819px;left:563.3px">Compaq Desktop</div>
<div class="c" style="top:819px;left:742.4px">IT Equipment</div>
<div class="c r" style="top:819px;right:840.5px">2,455.00</div>
<div class="c r" style="top:819px;right:675.5px">2,455.00</div>
<div class="c" style="top:819px;left:1213.9px">Straight Line</div>
<div class="c r" style="top:819px;right:379.0px">36</div>
<div class="c" style="top:819px;left:1510.2px">Fully Depreciated</div>
<div class="c r" style="top:819px;right:32.0px">1</div>
<!-- scrollbar -->
<div class="a" style="left:1844px;top:254px;width:17px;height:576px;background:#f0f0f0"></div>
<svg class="a" style="left:1848px;top:259px" width="10" height="8" viewBox="0 0 10 8"><path d="M1,6 L4.5,2 L8,6 Z" fill="#505050"/></svg>
<div class="a" style="left:1846px;top:341px;width:13px;height:470px;background:#c1c1c1"></div>
<div id="edge"></div>
</body></html>
